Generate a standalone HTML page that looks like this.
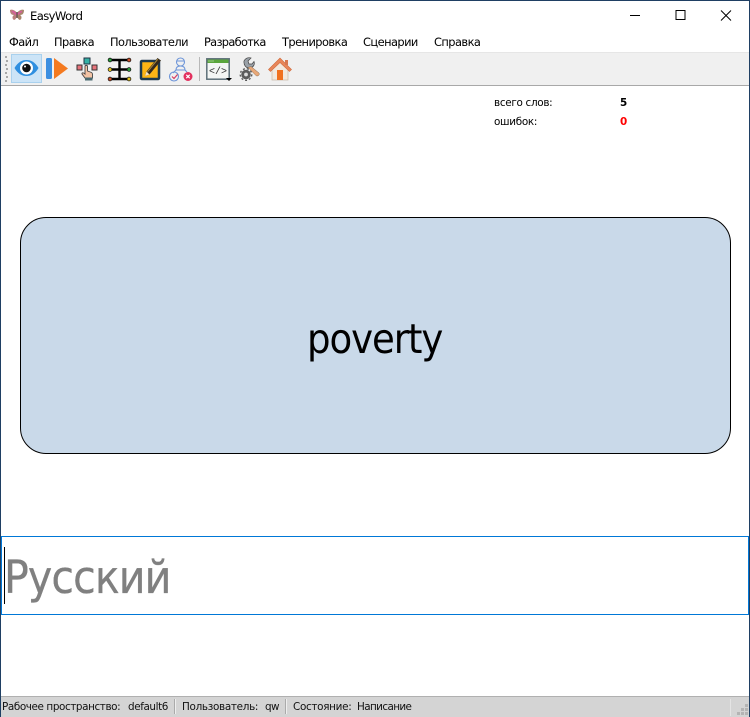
<!DOCTYPE html>
<html lang="ru"><head><meta charset="utf-8"><title>EasyWord</title>
<style>
html,body{margin:0;padding:0;background:#fff}
#w{position:relative;width:750px;height:717px;overflow:hidden;background:#fff;font-family:"DejaVu Sans","Liberation Sans",sans-serif;color:#000}
.t{position:absolute;white-space:nowrap;line-height:1}
.m{top:37px;font-size:11.4px;letter-spacing:-.55px;color:#000}
.s{top:702px;font-size:10.4px;letter-spacing:-.4px;color:#111}
svg{position:absolute;overflow:visible}
</style></head><body><div id="w">
<!-- frame -->
<div style="position:absolute;left:0;top:0;width:750px;height:1px;background:#1f3f63"></div>
<div style="position:absolute;left:0;top:0;width:1px;height:717px;background:#1f3f63"></div>
<div style="position:absolute;left:749px;top:0;width:1px;height:717px;background:#1f3f63"></div>

<!-- title bar -->
<svg style="left:9px;top:8px" width="16" height="14" viewBox="0 0 16 14"><path d="M8 5C6 2 3 1 1 2c0 3 1 5 4 5-2 1-2 4 0 5 1 0 3-2 3-5z" fill="#b97f7c"/><path d="M8 5c2-3 5-4 7-3 0 3-1 5-4 5 2 1 2 4 0 5-1 0-3-2-3-5z" fill="#a8846c"/><path d="M3 3.500c1 0 3 1 4 3M13 3.500c-1 0-3 1-4 3" stroke="#d85aa0" stroke-width="1.500" fill="none"/><path d="M8 4v6" stroke="#444" stroke-width="1"/></svg>
<div class="t" style="left:30px;top:11px;font-size:11.6px;letter-spacing:-.6px">EasyWord</div>
<svg style="left:630px;top:10px" width="110" height="12"><path d="M0 5.500H10" stroke="#000" stroke-width="1"/><rect x="46" y="0.500" width="9" height="9" fill="none" stroke="#000"/><path d="M91 0.500l10 10M101 0.500l-10 10" stroke="#000" stroke-width="1"/></svg>

<!-- menu -->
<div class="t m" style="left:9px">Файл</div>
<div class="t m" style="left:54px">Правка</div>
<div class="t m" style="left:110px">Пользователи</div>
<div class="t m" style="left:204px;letter-spacing:-.7px">Разработка</div>
<div class="t m" style="left:282px">Тренировка</div>
<div class="t m" style="left:363px">Сценарии</div>
<div class="t m" style="left:434px">Справка</div>

<!-- toolbar -->
<div style="position:absolute;left:1px;top:52px;width:748px;height:33px;background:#f0f0f0;border-top:1px solid #e6e6e6;box-sizing:border-box"></div>
<div style="position:absolute;left:1px;top:85px;width:748px;height:1px;background:#a8a8a8"></div>
<svg style="left:4px;top:56px" width="4" height="26"><g fill="#a8a8a8"><rect x="1" y="0" width="2" height="2"/><rect x="2" y="4" width="2" height="2"/><rect x="1" y="8" width="2" height="2"/><rect x="2" y="12" width="2" height="2"/><rect x="1" y="16" width="2" height="2"/><rect x="2" y="20" width="2" height="2"/><rect x="1" y="24" width="2" height="2"/></g></svg>
<div style="position:absolute;left:11px;top:54px;width:31px;height:29px;background:#cce4f7;border:1px solid #a9d1ee;box-sizing:border-box"></div>

<!-- eye -->
<svg style="left:14px;top:58px" width="25" height="20" viewBox="0 0 25 20"><path d="M.5 10C4 4 8 2 12.500 2S21 4 24.500 10C21 16 17 18 12.500 18S4 16 .5 10z" fill="#2f8fe0"/><circle cx="12.500" cy="10" r="6.500" fill="#fff"/><circle cx="12.500" cy="10" r="4.300" fill="#111"/><circle cx="11" cy="8.500" r="1" fill="#fff"/></svg>
<!-- play -->
<svg style="left:46px;top:58px" width="23" height="21"><rect x="0" y="0" width="6" height="21" rx="1.500" fill="#3d8fe0"/><path d="M8 0L22 10.500 8 21z" fill="#f47a20"/></svg>
<!-- hand -->
<svg style="left:76px;top:57px" width="24" height="24" viewBox="0 0 24 24"><rect x="8" y="1" width="6" height="6" fill="#35b0a5" stroke="#234" stroke-width="1"/><rect x="1" y="8" width="5" height="5" fill="#e8747c" stroke="#333"/><rect x="16" y="8" width="5" height="5" fill="#e8747c" stroke="#333"/><path d="M9 9.500c0-1.500 2.500-1.500 2.500 0V14l4 1.500c1 .5 1 1 1 2V21H9l-3-4c-.5-1 1-2 3 0z" fill="#f3c3a5" stroke="#444" stroke-width=".9"/><rect x="9" y="20.500" width="7.500" height="3" fill="#4a6a70"/></svg>
<!-- tree -->
<svg style="left:107px;top:57px" width="25" height="25" viewBox="0 0 25 25"><path d="M4 3H21M4 12.500H21M4 22H21M12.500 3V22" stroke="#000" stroke-width="2.400"/><circle cx="3" cy="3" r="1.900" fill="#2a9a3a" stroke="#111" stroke-width=".7"/><circle cx="22" cy="3" r="1.900" fill="#c8502a" stroke="#111" stroke-width=".7"/><circle cx="3" cy="12.500" r="1.900" fill="#e0c020" stroke="#111" stroke-width=".7"/><circle cx="22" cy="12.500" r="1.900" fill="#2a9a3a" stroke="#111" stroke-width=".7"/><circle cx="3" cy="22" r="1.900" fill="#c8502a" stroke="#111" stroke-width=".7"/><circle cx="22" cy="22" r="1.900" fill="#e0c020" stroke="#111" stroke-width=".7"/></svg>
<!-- note -->
<svg style="left:139px;top:57px" width="23" height="24" viewBox="0 0 23 24"><rect x="2" y="4" width="18" height="18" rx="1" fill="#fdb515" stroke="#1e3a4e" stroke-width="2.500"/><path d="M6 19l1.500-4.500L18.500 1 22 3.500 10.500 17.500z" fill="#33291c"/><path d="M8.500 14.800L18.800 2.200" stroke="#a88a3c" stroke-width="1"/><path d="M6 19l1.500-4.500 3 3z" fill="#f6e4c0"/></svg>
<!-- users -->
<svg style="left:168px;top:57px" width="25" height="25" viewBox="0 0 25 25"><g fill="none" stroke="#6c94d8" stroke-width="1.100"><circle cx="12.500" cy="5" r="4"/><path d="M8 13c0-3 2-4 4.500-4S17 10 17 13zM8.500 4h8M8 13l-3 3M17 13l2 2"/><circle cx="6" cy="19.500" r="4.500"/></g><path d="M4 19.500l2 2 3.500-4" fill="none" stroke="#d83a60" stroke-width="1.200"/><circle cx="20" cy="19.500" r="4.500" fill="#e2305e"/><path d="M18.300 17.800l3.400 3.400M21.700 17.800l-3.400 3.400" stroke="#fff" stroke-width="1.200"/></svg>
<div style="position:absolute;left:199px;top:57px;width:1px;height:24px;background:#b8b8b8"></div>
<!-- code window -->
<svg style="left:206px;top:58px" width="26" height="24" viewBox="0 0 26 24"><rect x=".8" y=".8" width="22.400" height="20.400" fill="#f4f6f4" stroke="#5d7078" stroke-width="1.500"/><rect x="1.500" y="1.500" width="21" height="3.500" fill="#5aa63c"/><path d="M2.500 3h1M4.500 3h1M6.500 3h1" stroke="#d8eed0"/><text x="12" y="16" font-family="Liberation Mono,monospace" font-size="10" text-anchor="middle" fill="#333">&lt;/&gt;</text><path d="M20 20h6l-3 3z" fill="#000"/></svg>
<!-- tools -->
<svg style="left:238px;top:57px" width="23" height="25" viewBox="0 0 23 25"><path d="M6 4c1-2.500 4-4 7-3l-3 3 1 3 3 0 2-2.500c1 3-.5 5.500-3 6l-2 .5C8 11 5.500 8 6 4z" fill="#9aa1a8" stroke="#444" stroke-width=".7"/><path d="M10 10.500l3-1L21 16c1 2-1 3.500-2.800 2.800z" fill="#e8a878" stroke="#8a6a50" stroke-width=".5"/><circle cx="8" cy="17.500" r="4.800" fill="#5c5c5c"/><circle cx="8" cy="17.500" r="5.800" fill="none" stroke="#555" stroke-width="1.300" stroke-dasharray="2 2"/><circle cx="8" cy="17.500" r="1.900" fill="#ddd"/></svg>
<!-- home -->
<svg style="left:268px;top:57px" width="24" height="24" viewBox="0 0 24 24"><path d="M4 11v12h16V11L12 3z" fill="#f2e8de" stroke="#c8b8a8" stroke-width=".7"/><path d="M.5 12.500L12 1l11.500 11.500-2 2L12 5.500 2.500 14.500z" fill="#e8865a" stroke="#d06a3a" stroke-width=".6"/><rect x="17" y="3" width="3" height="5" fill="#d87850"/><rect x="9" y="13" width="6" height="10" fill="#f0701e"/></svg>

<!-- stats -->
<div class="t" style="left:494px;top:98px;font-size:10.400px;letter-spacing:-.3px">всего слов:</div>
<div class="t" style="left:494px;top:117px;font-size:10.400px;letter-spacing:-.3px">ошибок:</div>
<div class="t" style="left:620px;top:98px;font-size:10.400px;font-weight:bold">5</div>
<div class="t" style="left:620px;top:117px;font-size:10.400px;font-weight:bold;color:#f00">0</div>

<!-- card -->
<div style="position:absolute;left:20px;top:217px;width:711px;height:237px;box-sizing:border-box;background:#c9d9e9;border:1px solid #000;border-radius:26px"></div>
<div class="t" style="left:306.500px;top:315px;font-size:41px;letter-spacing:-1.200px;line-height:48px;transform:scaleX(.905);transform-origin:0 0">poverty</div>

<!-- input -->
<div style="position:absolute;left:1px;top:536px;width:748px;height:79px;box-sizing:border-box;border:1px solid #0078d7;background:#fff"></div>
<div style="position:absolute;left:4px;top:547px;width:1px;height:57px;background:#000"></div>
<div class="t" style="left:3.500px;top:549.500px;font-size:45px;letter-spacing:-1px;line-height:56px;color:#808080;transform:scaleX(.915);transform-origin:0 0;-webkit-text-stroke:.3px #808080">Русский</div>

<!-- status bar -->
<div style="position:absolute;left:1px;top:696px;width:748px;height:21px;background:#d4d4d4;border-top:1px solid #b0b0b0;box-sizing:border-box"></div>
<div class="t s" style="left:2px">Рабочее пространство:</div>
<div class="t s" style="left:128px">default6</div>
<div style="position:absolute;left:174px;top:699px;width:1px;height:15px;background:#eee;border-left:1px solid #aaa"></div>
<div class="t s" style="left:182px;letter-spacing:-.3px">Пользователь:</div>
<div class="t s" style="left:265px;letter-spacing:-.6px">qw</div>
<div style="position:absolute;left:285px;top:699px;width:1px;height:15px;background:#eee;border-left:1px solid #aaa"></div>
<div class="t s" style="left:293px;letter-spacing:-.3px">Состояние:</div>
<div class="t s" style="left:357px;letter-spacing:-.6px">Написание</div>
<div style="position:absolute;left:730px;top:699px;width:1px;height:17px;background:#e4e4e4"></div>
<svg style="left:737px;top:704px" width="11" height="11"><g fill="#b4b4b4"><rect x="8" y="0" width="3" height="3"/><rect x="4" y="4" width="3" height="3"/><rect x="8" y="4" width="3" height="3"/><rect x="0" y="8" width="3" height="3"/><rect x="4" y="8" width="3" height="3"/><rect x="8" y="8" width="3" height="3"/></g></svg>
</div></body></html>
